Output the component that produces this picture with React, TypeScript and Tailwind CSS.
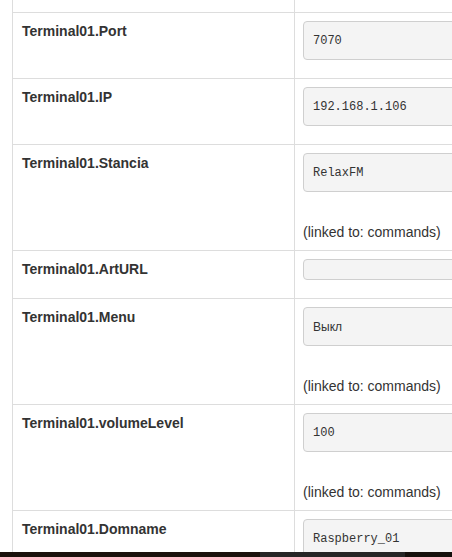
import React from "react";

type Row = {
  label: string;
  value?: string;
  mono?: boolean;
  linked?: boolean;
  small?: boolean;
};

const rows: Row[] = [
  { label: "Terminal01.Port", value: "7070", mono: true },
  { label: "Terminal01.IP", value: "192.168.1.106", mono: true },
  { label: "Terminal01.Stancia", value: "RelaxFM", mono: true, linked: true },
  { label: "Terminal01.ArtURL", value: "", small: true },
  { label: "Terminal01.Menu", value: "Выкл", mono: false, linked: true },
  { label: "Terminal01.volumeLevel", value: "100", mono: true, linked: true },
  { label: "Terminal01.Domname", value: "Raspberry_01", mono: true },
];

function Field({ row }: { row: Row }) {
  if (row.small) {
    return (
      <div className="h-[21px] w-[400px] mb-[10px] rounded-[4px] border border-[#cfcfcf] bg-[#f4f4f4]" />
    );
  }
  return (
    <div
      className={
        "h-[39px] w-[400px] mb-[10px] rounded-[4px] border border-[#cfcfcf] bg-[#f4f4f4] flex items-center pl-[9px] text-[#333] " +
        (row.mono
          ? "text-[12px] font-['Liberation_Mono',monospace]"
          : "text-[12px] font-['Liberation_Sans',Arial,sans-serif]")
      }
    >
      {row.value}
    </div>
  );
}

export default function App() {
  return (
    <div className="w-[452px] h-[557px] overflow-hidden bg-white relative font-['Liberation_Sans',Arial,sans-serif] text-[14px] leading-[20px] text-[#333]">
      <div className="ml-[12px] border-l border-[#dddddd] w-[700px]">
        <div className="flex h-[12px]">
          <div className="w-[282px] border-r border-[#dddddd]" />
          <div className="flex-1" />
        </div>
        {rows.map((r) => (
          <div key={r.label} className="flex border-t border-[#dddddd]">
            <div className="w-[282px] shrink-0 border-r border-[#dddddd] py-[8px] pl-[9px] pr-[8px] font-bold">
              {r.label}
            </div>
            <div className="flex-1 p-[8px]">
              <Field row={r} />
              {r.linked && <div className="pt-[20px]">(linked to: commands)</div>}
            </div>
          </div>
        ))}
      </div>
      <div className="absolute left-0 right-0 top-[552px] h-[5px] flex">
        <div className="w-[260px] bg-[#1a110c]" />
        <div className="w-[145px] bg-[#262626]" />
        <div className="flex-1 bg-[#15100c]" />
      </div>
    </div>
  );
}
